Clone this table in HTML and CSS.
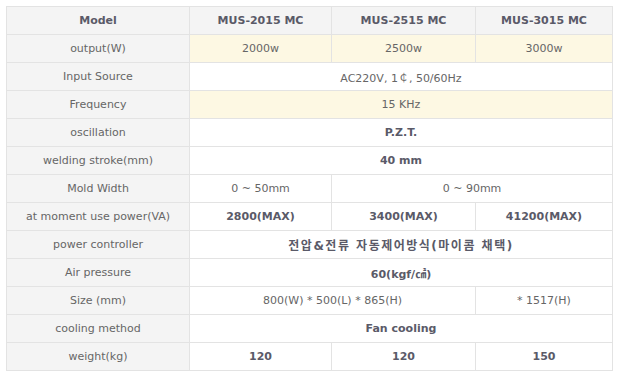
FILE: index.html
```html
<!DOCTYPE html>
<html lang="ko">
<head>
<meta charset="utf-8">
<title>Spec</title>
<link rel="stylesheet" href="styles.css">
</head>
<body>
<table class="spec">
  <colgroup>
    <col class="c1"><col class="c2"><col class="c3"><col class="c4">
  </colgroup>
  <tr class="head">
    <th>Model</th><th>MUS-2015 MC</th><th>MUS-2515 MC</th><th>MUS-3015 MC</th>
  </tr>
  <tr class="yellow">
    <th>output(W)</th><td>2000w</td><td>2500w</td><td>3000w</td>
  </tr>
  <tr>
    <th>Input Source</th><td colspan="3">AC220V, 1￠, 50/60Hz</td>
  </tr>
  <tr class="yellow">
    <th>Frequency</th><td colspan="3">15 KHz</td>
  </tr>
  <tr>
    <th>oscillation</th><td colspan="3" class="b">P.Z.T.</td>
  </tr>
  <tr>
    <th>welding stroke(mm)</th><td colspan="3" class="b">40 mm</td>
  </tr>
  <tr>
    <th>Mold Width</th><td>0 ~ 50mm</td><td colspan="2">0 ~ 90mm</td>
  </tr>
  <tr>
    <th>at moment use power(VA)</th><td class="b">2800(MAX)</td><td class="b">3400(MAX)</td><td class="b">41200(MAX)</td>
  </tr>
  <tr>
    <th>power controller</th><td colspan="3" class="b ko">전압&amp;전류 자동제어방식(마이콤 채택)</td>
  </tr>
  <tr>
    <th>Air pressure</th><td colspan="3" class="b">60(kgf/㎠)</td>
  </tr>
  <tr>
    <th>Size (mm)</th><td colspan="2">800(W) * 500(L) * 865(H)</td><td>* 1517(H)</td>
  </tr>
  <tr>
    <th>cooling method</th><td colspan="3" class="b">Fan cooling</td>
  </tr>
  <tr>
    <th>weight(kg)</th><td class="b">120</td><td class="b">120</td><td class="b">150</td>
  </tr>
</table>
</body>
</html>
```
FILE: styles.css
```css
html, body {
  margin: 0;
  background: #ffffff;
}
body {
  padding: 6px;
  font-family: "DejaVu Sans", "Noto Sans CJK KR", sans-serif;
  font-size: 11px;
  color: #666666;
}
.spec {
  border-collapse: collapse;
  table-layout: fixed;
  width: 606px;
}
.c1 { width: 183px; }
.c2 { width: 142px; }
.c3 { width: 144px; }
.c4 { width: 137px; }
.spec th,
.spec td {
  border: 1px solid #e3e3e3;
  height: 27px;
  padding: 0;
  text-align: center;
  vertical-align: middle;
  white-space: nowrap;
}
.spec th {
  background: #f4f4f4;
  font-weight: normal;
  color: #666666;
}
.spec .head th {
  font-weight: bold;
  color: #5a5a68;
}
.spec .yellow td {
  background: #fdf8e3;
}
.spec td.b {
  font-weight: bold;
  color: #5a5a68;
}
.spec td.ko {
  font-size: 12px;
  letter-spacing: 1.5px;
}
```
